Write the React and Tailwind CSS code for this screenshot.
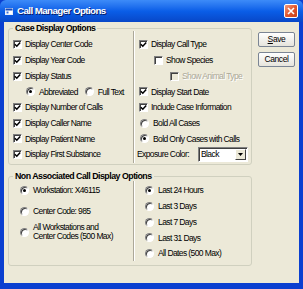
import React from "react";

function Check({ checked, disabled }) {
  return (
    <span
      className={`w-[9px] h-[9px] shrink-0 flex items-center justify-center border border-t-[#808080] border-l-[#808080] border-b-white border-r-white shadow-[inset_1px_1px_0_#404040] ${
        disabled ? "bg-[#ECE9D8]" : "bg-white"
      }`}
    >
      {checked && (
        <svg width="7" height="7" viewBox="0 0 7 7">
          <path d="M0.8 3.2 L2.8 5.2 L6.2 1.4" stroke="#000" strokeWidth="1.5" fill="none" />
        </svg>
      )}
    </span>
  );
}

function Radio({ sel }) {
  return (
    <span className="w-[9px] h-[9px] shrink-0 rounded-full flex items-center justify-center border border-t-[#808080] border-l-[#808080] border-b-white border-r-white bg-white shadow-[inset_1px_1px_0_#404040]">
      {sel && <span className="w-[3px] h-[3px] rounded-full bg-black" />}
    </span>
  );
}

function Row({ children, className = "" }) {
  return <div className={`h-[15.7px] flex items-center gap-[3px] whitespace-nowrap ${className}`}>{children}</div>;
}

function Divider() {
  return <div className="w-[2px] border-l border-l-[#ACA899] border-r border-r-white" />;
}

export default function App() {
  return (
    <div className="w-[303px] h-[289px] overflow-hidden bg-[#0A3FD0] [font-family:'Liberation_Sans',Arial,sans-serif] text-[8.5px] tracking-[-0.6px] text-black">
      {/* Title bar */}
      <div className="h-[22px] flex items-center bg-gradient-to-b from-[#3D8BF8] via-[#0A5EE8] to-[#0847C8] rounded-t-[6px] pl-[5px] pr-[5px]">
        <svg width="8" height="7" viewBox="0 0 8 7" className="shrink-0">
          <rect x="0.5" y="0.5" width="7" height="6" fill="#fff" stroke="#E8EEF8" />
          <rect x="0.5" y="0.5" width="7" height="2" fill="#1B4BB8" />
          <rect x="1.5" y="3.5" width="2" height="2" fill="#3A6FD8" />
        </svg>
        <span className="ml-[4px] text-white font-bold text-[9.8px] tracking-[-0.6px] [text-shadow:1px_1px_0_#0A1E6A]">
          Call Manager Options
        </span>
        <div className="ml-auto w-[14px] h-[14px] rounded-[2px] border border-white bg-gradient-to-br from-[#F09A7C] via-[#E2572E] to-[#C6401A] flex items-center justify-center">
          <svg width="8" height="8" viewBox="0 0 8 8">
            <path d="M1 1 L7 7 M7 1 L1 7" stroke="#fff" strokeWidth="1.6" />
          </svg>
        </div>
      </div>

      {/* Body */}
      <div className="mx-[4px] h-[261px] bg-[#ECE9D8] flex pt-[1px]">
        <div className="ml-[4px] w-[244px] flex flex-col">
          {/* Group 1 */}
          <fieldset className="border border-[#D0D0BF] rounded-[3px] h-[142px]">
            <legend className="ml-[4px] px-[2px] font-bold text-[8.8px] tracking-[-0.5px] leading-[11px]">Case Display Options</legend>
            <div className="flex h-full -mt-[3px]">
              <div className="w-[124px] pt-[6px] pl-[4px]">
                <Row><Check checked /><span>Display Center Code</span></Row>
                <Row><Check checked /><span>Display Year Code</span></Row>
                <Row><Check checked /><span>Display Status</span></Row>
                <Row className="pl-[13px]">
                  <Radio sel />
                  <span className="ml-[1px]">Abbreviated</span>
                  <span className="ml-[4px] flex"><Radio /></span>
                  <span className="ml-[1px]">Full Text</span>
                </Row>
                <Row><Check checked /><span>Display Number of Calls</span></Row>
                <Row><Check checked /><span>Display Caller Name</span></Row>
                <Row><Check checked /><span>Display Patient Name</span></Row>
                <Row><Check checked /><span>Display First Substance</span></Row>
              </div>
              <Divider />
              <div className="flex-1 pt-[6px] pl-[4px]">
                <Row><Check checked /><span>Display Call Type</span></Row>
                <Row className="pl-[15px]"><Check /><span>Show Species</span></Row>
                <Row className="pl-[31px]">
                  <Check disabled />
                  <span className="text-[#ACA899] [text-shadow:1px_1px_0_#fff]">Show Animal Type</span>
                </Row>
                <Row><Check checked /><span>Display Start Date</span></Row>
                <Row><Check checked /><span>Include Case Information</span></Row>
                <Row className="pl-[1px]"><Radio /><span className="ml-[1px]">Bold All Cases</span></Row>
                <Row className="pl-[1px]"><Radio sel /><span className="ml-[1px]">Bold Only Cases with Calls</span></Row>
                <Row className="-ml-[2px] gap-0">
                  <span>Exposure Color:</span>
                  <div className="ml-auto mr-[3px] w-[50px] h-[15px] bg-white border border-t-[#808080] border-l-[#808080] border-b-white border-r-white shadow-[inset_1px_1px_0_#404040] flex items-center">
                    <span className="pl-[2px] flex-1">Black</span>
                    <div className="w-[11px] h-[11px] mr-[1px] bg-[#ECE9D8] border border-t-white border-l-white border-b-[#404040] border-r-[#404040] flex items-center justify-center">
                      <svg width="5" height="3" viewBox="0 0 5 3">
                        <path d="M0 0 H5 L2.5 3 Z" fill="#000" />
                      </svg>
                    </div>
                  </div>
                </Row>
              </div>
            </div>
          </fieldset>

          {/* Group 2 */}
          <fieldset className="mt-[6px] border border-[#D0D0BF] rounded-[3px] h-[95px]">
            <legend className="ml-[4px] px-[2px] font-bold text-[8.8px] tracking-[-0.5px] leading-[11px]">Non Associated Call Display Options</legend>
            <div className="flex h-full -mt-[1px] pb-[4px]">
              <div className="w-[124px] pt-[2px] pl-[11px]">
                <Row><Radio sel /><span className="ml-[1px]">Workstation: X46115</span></Row>
                <Row className="mt-[5px]"><Radio /><span className="ml-[1px]">Center Code: 985</span></Row>
                <div className="mt-[4px] flex items-center gap-[4px] whitespace-nowrap">
                  <Radio />
                  <span className="leading-[9px]">All Workstations and<br />Center Codes (500 Max)</span>
                </div>
              </div>
              <Divider />
              <div className="flex-1 pt-[2px] pl-[10px]">
                <Row><Radio sel /><span className="ml-[1px]">Last 24 Hours</span></Row>
                <Row><Radio /><span className="ml-[1px]">Last 3 Days</span></Row>
                <Row><Radio /><span className="ml-[1px]">Last 7 Days</span></Row>
                <Row><Radio /><span className="ml-[1px]">Last 31 Days</span></Row>
                <Row><Radio /><span className="ml-[1px]">All Dates (500 Max)</span></Row>
              </div>
            </div>
          </fieldset>
        </div>

        {/* Buttons */}
        <div className="ml-[6px] mt-[9px] flex flex-col gap-[5px]">
          <button className="w-[37px] h-[15px] rounded-[2px] border border-[#7B8594] bg-gradient-to-b from-white to-[#E6E4DC] text-[8.5px] tracking-[-0.4px] leading-none">
            <span className="underline">S</span>ave
          </button>
          <button className="w-[37px] h-[15px] rounded-[2px] border border-[#7B8594] bg-gradient-to-b from-white to-[#E6E4DC] text-[8.5px] tracking-[-0.4px] leading-none">
            Cancel
          </button>
        </div>
      </div>
    </div>
  );
}
